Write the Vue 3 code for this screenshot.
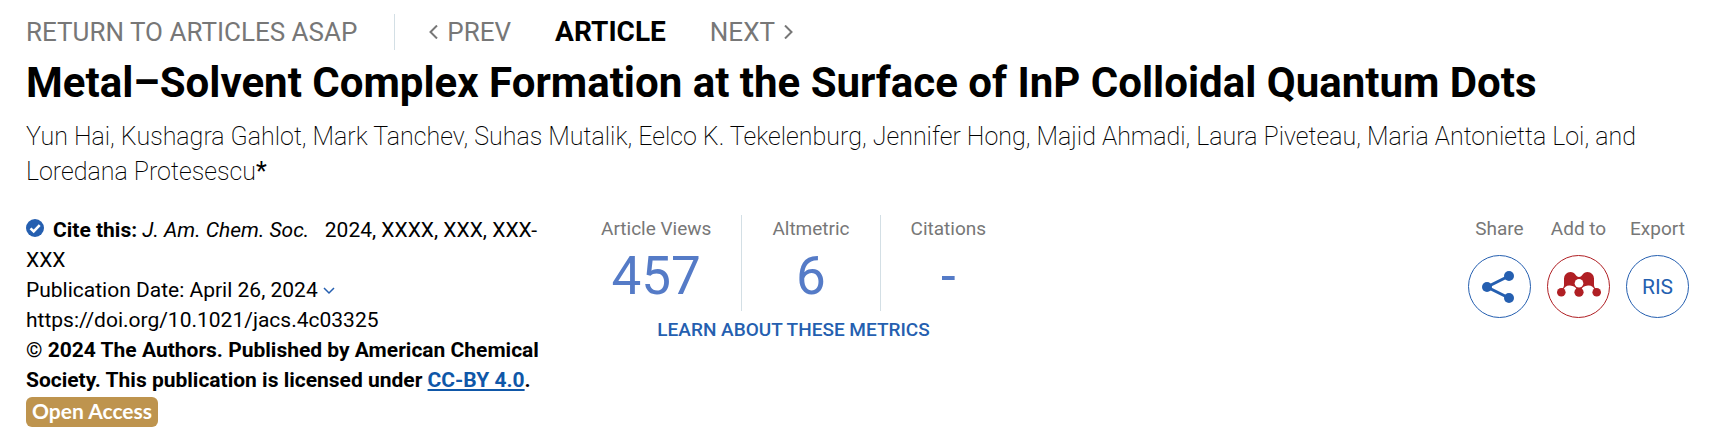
<script setup>
const metrics = [
  { label: 'Article Views', value: '457' },
  { label: 'Altmetric', value: '6' },
  { label: 'Citations', value: '-' },
]
</script>

<template>
  <main class="article-header">
    <nav class="nav" aria-label="Article navigation">
      <a class="return" href="#">RETURN TO ARTICLES ASAP</a>
      <a class="step" href="#">
        <svg width="9" height="14" viewBox="0 0 9 14" aria-hidden="true"><path d="M8 .5 1.500 7 8 13.500" /></svg>
        PREV
      </a>
      <span class="current">ARTICLE</span>
      <a class="step" href="#">
        NEXT
        <svg width="9" height="14" viewBox="0 0 9 14" aria-hidden="true"><path d="M1 .5 7.500 7 1 13.500" /></svg>
      </a>
    </nav>

    <h1>Metal–Solvent Complex Formation at the Surface of InP Colloidal Quantum Dots</h1>
    <p class="authors">
      Yun Hai, Kushagra Gahlot, Mark Tanchev, Suhas Mutalik, Eelco K. Tekelenburg, Jennifer Hong, Majid Ahmadi, Laura Piveteau, Maria Antonietta Loi, and Loredana Protesescu<span class="mark">*</span>
    </p>

    <div class="details">
      <section class="citation">
        <p>
          <svg class="check" width="18" height="18" viewBox="0 0 18 18" aria-hidden="true">
            <circle cx="9" cy="9" r="9" fill="#255fb0" />
            <path d="m4.500 9.300 3.200 3.200 6-6.300" fill="none" stroke="#fff" stroke-width="2.600" />
          </svg>
          <b>Cite this:</b> <i>J. Am. Chem. Soc.</i>&nbsp;&nbsp; 2024, XXXX, XXX, XXX-XXX
        </p>
        <p>
          Publication Date: April 26, 2024
          <button class="toggle" type="button" aria-label="Show publication history">
            <svg width="12" height="8" viewBox="0 0 12 8" aria-hidden="true"><path d="m1 1 5 5 5-5" /></svg>
          </button>
        </p>
        <p><a class="doi" href="#">https://doi.org/10.1021/jacs.4c03325</a></p>
        <p class="license">© 2024 The Authors. Published by American Chemical Society. This publication is licensed under <a href="#">CC-BY 4.0</a>.</p>
        <span class="badge">Open Access</span>
      </section>

      <section class="metrics">
        <dl>
          <div v-for="m in metrics" :key="m.label" class="metric">
            <dt>{{ m.label }}</dt>
            <dd>{{ m.value }}</dd>
          </div>
        </dl>
        <a class="learn" href="#">LEARN ABOUT THESE METRICS</a>
      </section>

      <section class="actions">
        <div class="action">
          <label for="share">Share</label>
          <button id="share" type="button">
            <svg class="share-icon" width="32" height="32" viewBox="0 0 32 32" aria-hidden="true">
              <path d="M27 5 5 16l22 11" fill="none" stroke="#255fb0" stroke-width="3" />
              <g fill="#255fb0"><circle cx="5" cy="16" r="5" /><circle cx="27" cy="5" r="5" /><circle cx="27" cy="27" r="5" /></g>
            </svg>
          </button>
        </div>
        <div class="action">
          <label for="add">Add to</label>
          <button id="add" class="red" type="button">
            <svg class="mendeley" width="44" height="25" viewBox="0 0 44 25" aria-hidden="true">
              <g fill="#b01f24">
                <path d="M7 6.500A6.400 6.400 0 0 1 13.400 0C18.500 0 18.500 5 22 5S25.500 0 30.600 0A6.400 6.400 0 0 1 37 6.500V13c0 2 1 3 2.500 4L38 18c-1.500-3-4-5-7-4.500-4 .5-5.500 1.500-6.500 3.500h-5c-1-2-2.500-3-6.500-3.500-3-.5-5.500 1.500-7 4.500l-1.500-1C6 16 7 15 7 13Z" />
                <circle cx="4.300" cy="20.200" r="4.300" /><circle cx="22" cy="20.200" r="4.600" /><circle cx="39.700" cy="20.200" r="4.300" />
              </g>
              <circle cx="22" cy="11.300" r="4.300" fill="#fff" />
            </svg>
          </button>
        </div>
        <div class="action">
          <label for="export">Export</label>
          <button id="export" type="button">RIS</button>
        </div>
      </section>
    </div>
  </main>
</template>

<style>
body { margin: 0; background: #fff; }
</style>

<style scoped>
.article-header {
  padding: 14px 40px 7px 26px;
  font-family: Roboto, "Liberation Sans", sans-serif;
  font-size: 21px;
  line-height: 30px;
  color: #000;
}
h1, p, dl, dd { margin: 0; }
a { text-decoration: none; }
.nav {
  display: flex;
  align-items: center;
  font-size: 26px;
  line-height: 36px;
}
.nav a { color: #777; }
.return {
  padding-right: 37px;
  border-right: 1px solid #d3dfe5;
}
.step { display: flex; align-items: center; gap: 9px; }
.return + .step { margin-left: 34px; }
.step path { fill: none; stroke: #777; stroke-width: 2; }
.current { margin: 0 44px; font-size: 28px; font-weight: 700; }
h1 {
  margin-top: 6px;
  font-size: 42px;
  line-height: 54px;
  font-weight: 700;
}
.authors {
  margin-top: 9px;
  font-size: 25px;
  line-height: 35px;
  font-weight: 200;
}
.mark { font-weight: 400; }
.details {
  display: flex;
  align-items: flex-start;
  margin-top: 26px;
}
.citation { width: 520px; margin-right: 25px; }
.check { margin-right: 9px; }
.toggle {
  padding: 0;
  border: 0;
  background: none;
  vertical-align: middle;
}
.toggle svg { display: block; }
.toggle path { fill: none; stroke: #255fb0; stroke-width: 1.5; }
.doi { color: inherit; }
.license { font-weight: 700; }
.license a { color: #0f57a8; text-decoration: underline; }
.badge {
  display: block;
  width: fit-content;
  margin-top: 2px;
  padding: 0 6px 2px;
  border-radius: 6px;
  background: #be944e;
  color: #fff;
  font-family: Lato, sans-serif;
  font-weight: 700;
  line-height: 28px;
}
.metrics { text-align: center; }
dl { display: flex; }
.metric { padding: 0 30px; }
.metric + .metric { border-left: 1px solid #d3dfe5; }
dt, .action label {
  font-size: 19px;
  line-height: 27px;
  color: #777;
}
dd {
  font-size: 53px;
  line-height: 69px;
  color: #557bc7;
}
.learn {
  display: block;
  margin-top: 4px;
  font-size: 19px;
  font-weight: 500;
  color: #255fb0;
}
.actions { display: flex; gap: 16px; margin-left: auto; }
.action {
  display: flex;
  flex-direction: column;
  align-items: center;
  gap: 13px;
  width: 63px;
}
.action button {
  display: flex;
  align-items: center;
  justify-content: center;
  width: 63px;
  height: 63px;
  padding: 0;
  border: 1px solid #255fb0;
  border-radius: 50%;
  background: #fff;
  font: inherit;
  color: #255fb0;
}
.action .red { border-color: #b01f24; }
.share-icon { margin-right: 4px; }
.mendeley { margin-bottom: 4px; }
.action label { white-space: nowrap; }
</style>
